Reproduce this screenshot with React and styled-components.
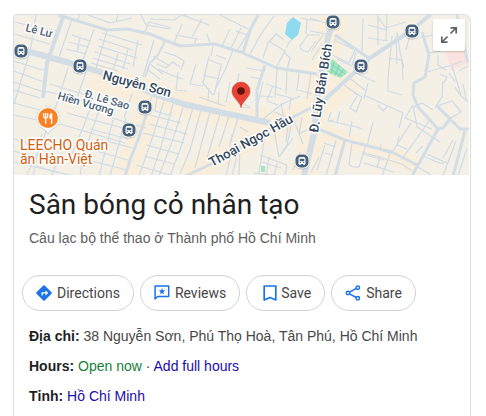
import React from "react";
import styled, { createGlobalStyle, css } from "styled-components";

const GlobalStyle = createGlobalStyle`
  * {
    box-sizing: border-box;
  }
  body {
    margin: 0;
    background: #fff;
    color: #474747;
    font: 14px/20px "Liberation Sans", Arial, sans-serif;
  }
`;

const Page = styled.main`
  padding: 14px 15px 0 13px;
`;

const Card = styled.article`
  min-height: calc(100vh - 14px);
  border: 1px solid #dadce0;
  border-bottom: none;
  border-radius: 4px 8px 0 0;
  overflow: hidden;
`;

const MapFrame = styled.div`
  position: relative;
  height: 160px;
  margin-right: 1px;
  background: #f4f0e5;
`;

const MapSvg = styled.svg`
  display: block;
  width: 100%;
  height: 100%;
`;

const labelHalo = css`
  paint-order: stroke;
  stroke: #fff;
  stroke-width: 3px;
  stroke-linejoin: round;
`;

const StreetLabel = styled.text`
  ${labelHalo};
  font-family: Roboto, sans-serif;
  font-size: ${({ $major }) => ($major ? 13 : 11)}px;
  font-weight: 500;
  fill: ${({ $major }) => ($major ? "#33475b" : "#4a6075")};
`;

const PlaceLabel = styled.text`
  ${labelHalo};
  font-family: Roboto, sans-serif;
  font-size: 14px;
  fill: #d0600f;
`;

const ExpandButton = styled.button`
  position: absolute;
  top: 4px;
  right: 4px;
  display: grid;
  place-items: center;
  width: 32px;
  height: 32px;
  padding: 0;
  border: none;
  border-radius: 2px;
  background: #fff;
  box-shadow: 0 1px 2px rgba(0, 0, 0, 0.2);
  cursor: pointer;
`;

const Header = styled.header`
  padding: 12px 15px 0;
`;

const Title = styled.h1`
  margin: 0 0 5px;
  color: #1f1f1f;
  font: 400 28px/36px Roboto, sans-serif;
`;

const Subtitle = styled.p`
  margin: 0;
  color: #5e5e5e;
`;

const Actions = styled.div`
  display: flex;
  flex-wrap: wrap;
  gap: 6px;
  padding: 27px 8px 0;
`;

const ActionButton = styled.button`
  display: flex;
  align-items: center;
  gap: 2px;
  height: 36px;
  padding: 0 13px 0 12px;
  border: 1px solid #d2d2d2;
  border-radius: 18px;
  background: #fff;
  color: #474747;
  font: 400 14px/20px Roboto, sans-serif;
  cursor: pointer;
`;

const Facts = styled.div`
  display: flex;
  flex-direction: column;
  gap: 10px;
  padding: 15px 15px 16px;
`;

const Fact = styled.div``;

const FactName = styled.span`
  color: #1f1f1f;
  font-weight: 700;
`;

const OpenNow = styled.span`
  color: #188038;
`;

const FactLink = styled.a`
  color: #1a0dab;
  text-decoration: none;

  &:hover {
    text-decoration: underline;
  }
`;

const mainRoads = [
  { w: 6, d: "M14 47L30 52L70 63L100 72L157 95L183 104L233 115L270 123" },
  { w: 6, d: "M334 15L333 22L328 37L317 100L314 134L304 176" },
  { w: 3, d: "M58 15L107 30L127 29L150 34L167 41L180 46L215 44L243 53L277 68L317 74" },
  { w: 3, d: "M186 176L213 163L267 131L293 117L307 110L318 105" },
  { w: 4, d: "M431 14L412 30L370 58L330 95L318 106" },
  { w: 3, d: "M370 59L335 35" },
  { w: 3, d: "M258 15L250 30L243 53" },
  { w: 3, d: "M265 65L257 90L257 117" },
  { w: 2, d: "M165 41L158 55L150 63L145 77" },
  { w: 4, d: "M63 17L47 63L43 98" },
  { w: 3, d: "M147 113L138 140L130 160L125 176" },
  { w: 3, d: "M422 32L429 55L425 77L414 83L413 95L418 107L438 129L412 176" },
  { w: 3, d: "M438 129L443 128L450 119L437 106L460 129L470 129" },
  { w: 3, d: "M465 131L453 176" },
  { w: 3, d: "M316 128L345 140L392 152L417 165" },
  { w: 3, d: "M345 140L335 176" },
  { w: 3, d: "M457 15L468 63" },
];

const sideRoads = [
  // north-west blocks
  "M14 22L56 31M14 34L50 44M14 61L46 71M14 71L44 82M14 82L44 92M14 90L40 98",
  "M36 15L30 52L20 84L14 104M72 19L58 60M94 29L82 63M107 31L96 68",
  "M72 35L90 41M68 42L89 47M66 49L86 54M80 38L77 52M102 33L142 45M99 39L133 50",
  "M98 46L137 58M95 52L130 64M93 58L128 69M91 63L118 71M138 40L133 67M128 49L123 69M118 54L113 70",
  "M80 15L77 21M88 15L110 23L132 18M116 22L118 15M141 15L146 25L170 29M154 40L143 77",
  "M145 32L149 22L172 28M153 56L170 66M150 64L163 74M148 70L160 79",
  // north middle
  "M150 19L174 20L182 15M182 15L209 25M202 19L192 37M182 24L174 43M175 35L198 39M184 15L190 18L201 22",
  "M207 34L210 43M213 46L211 56M196 38L194 46M220 15L248 29M230 29L222 46M241 28L231 48M236 31L250 36M248 33L237 51",
  "M274 16L261 34L250 54M233 50L226 68L216 88M216 55L226 59M209 60L222 65M203 75L219 79M196 64L190 84L203 86",
  "M209 56L203 83L213 95M221 66L214 95M263 58L268 43L276 34L284 40M270 42L285 51L277 66M284 52L290 58L287 70",
  "M291 40L286 48M307 19L306 34",
  "M320 35L308 35L300 46Q300 51 308 52L316 41",
  "M300 18L317 21M164 52L176 56L184 61L181 70M157 64L166 68L173 62L180 67M158 69L171 75L183 79M178 72L176 90L187 91",
  "M246 68L265 71M250 77L262 79M239 73L237 85M277 69L275 98M287 70L286 94M299 73L297 91M275 94L292 98M266 84L282 89",
  "M263 82L258 103M273 86L267 100M311 74L307 99M299 90L312 94",
  // streets below the main road
  "M14 103L54 114M14 115L60 125M50 84L128 108M45 91L84 101M60 124L125 143M67 113L138 132M112 118L146 128",
  "M56 106L38 152L26 176M68 68L56 106M86 72L76 101M101 105L84 153L80 176M113 120L99 176M126 118L110 176M92 103L83 128L72 154",
  "M14 139L36 145M14 151L34 157M14 162L74 176M86 148L128 160M80 158L127 170M98 139L133 148M90 129L128 139",
  "M42 134L33 176M62 153L51 176M36 166L59 173M132 94L124 118M152 96L146 116L138 136M164 101L150 145L139 176M173 104L160 150L151 176",
  "M183 108L173 139L159 176M193 108L180 150L170 176M201 110L190 150L180 174M210 112L195 168M220 114L207 158M229 116L219 147M238 118L230 144",
  "M150 115L181 123M149 124L187 134M143 133L184 143M146 145L179 154M144 156L174 164M136 165L170 175M157 97L155 111L172 116",
  "M232 134L229 151M240 127L248 132M249 136L256 140M232 151L226 176M238 151L232 176M265 135L259 173",
  // south middle
  "M274 130L279 157L287 145L291 126M269 131L281 124M280 156L293 138M289 117L286 142M293 118L303 144M302 117L299 134L310 128",
  "M260 155L287 165L285 176M262 162L281 168M269 157L266 176M277 163L274 176M253 173L282 176M300 152L293 170M240 145L239 176",
  "M199 97L225 106M209 88L208 101M219 92L218 105M230 82L226 103M246 92L244 104L250 108L240 107M267 101L278 105M260 96L273 97",
  "M263 119L282 104L300 96M274 112L294 120M281 103L284 118M291 98L289 110",
  // north-east
  "M310 18L326 23M310 31L326 34M322 44L312 60M323 35L311 52M336 41L355 50L349 63L330 54L336 38M356 52L352 66L337 59",
  "M363 19L362 52M378 15L378 45M387 15L386 40M368 25L387 30M368 38L388 41M392 36L388 78L388 91L402 95M396 36L397 64M388 58L402 60L403 80",
  "M377 16L386 28L406 22M397 32L400 52L404 68M410 34L406 50M420 38L450 31L461 25",
  "M429 53L440 51L448 44M427 72L452 65L463 61M438 55L438 65L446 70M440 74L447 77L444 83M452 66L461 95M449 73L455 82",
  "M443 81L442 97L435 108M438 44L444 51M468 66L459 71M463 84L466 99M455 87L460 95L468 102",
  "M356 73L375 82M368 83L364 99M348 77L365 90M344 85L360 96",
  // south-east
  "M357 96L350 108L356 112L362 97L354 93M378 105L383 111L387 107M364 95L403 113L399 128M373 122L367 146M331 112L328 121L334 120",
  "M329 121L353 126L363 129M340 111L337 123M352 121L349 137M381 144L380 150L389 153M399 136L397 145L407 149",
  "M325 145L317 170M336 140L326 176M324 143L336 147M325 153L333 155M352 143L349 164Q352 168 359 167L366 145M362 152L402 164L412 171",
  "M362 154L384 160M380 156L377 168M364 163L394 172M391 151L382 176M429 121L402 159M411 123L393 151",
  "M432 129L405 118L413 105M413 105L417 127L440 142M419 110L428 116",
  "M433 110L422 103L414 107M437 106L452 101L461 112L451 118L441 110",
  "M456 141L443 176M453 140L443 158M467 148L458 176M423 146L416 153M423 156L437 162L444 164M427 154L447 163M413 164L431 175",
  "M319 157L311 172",
];

const busStops = [
  [21, 51],
  [80, 66],
  [145, 107],
  [129, 130],
  [302, 161],
  [333, 22],
  [361, 66],
  [412, 31],
];

const streetLabels = [
  { text: "Lê Lư", x: 25, y: 31, angle: 14 },
  { text: "Đ. Lê Sao", x: 84, y: 97, angle: 16 },
  { text: "Hiền Vương", x: 57, y: 99, angle: 16 },
  { text: "Nguyễn Sơn", x: 102, y: 79, angle: 15, major: true },
  { text: "Thoại Ngọc Hầu", x: 212, y: 167, angle: -29, major: true },
  { text: "Đ. Lũy Bán Bích", x: 318, y: 133, angle: -81, major: true },
];

function BusStop({ x, y }) {
  return (
    <g transform={`translate(${x} ${y})`}>
      <rect x="-7.5" y="-6.5" width="15" height="15" rx="6" fill="#8a8f96" opacity="0.35" />
      <rect x="-7.3" y="-7.3" width="14.6" height="14.6" rx="5.5" fill="#fff" />
      <rect x="-6.5" y="-6.5" width="13" height="13" rx="5" fill="#47627a" />
      <path d="M-3.5 3V-2Q-3.5-4-1.5-4H1.5Q3.5-4 3.5-2V3H2.8V4H1.3V3H-1.3V4H-2.8V3Z" fill="#fff" />
      <path d="M-2.3-2.2H2.3V.2H-2.3Z" fill="#47627a" />
      <path d="M-2.3 1.5H-1.2M1.2 1.5H2.3" stroke="#47627a" />
    </g>
  );
}

function AreaMap() {
  return (
    <MapSvg viewBox="14 15 455 160" preserveAspectRatio="xMidYMid slice" role="img" aria-label="Map">
      <g fill="none" stroke="#f8eedb" strokeLinejoin="round">
        <path d="M90 76L157 95L183 104L233 115L270 123" strokeWidth="26" />
        <path d="M186 176L267 131L318 105L355 78" strokeWidth="24" />
        <path d="M334 15L317 100L304 176" strokeWidth="26" />
        <path d="M316 128L345 140L417 165" strokeWidth="16" />
        <path d="M147 113L125 176" strokeWidth="24" />
      </g>
      <path d="M445 49L466 49L468 63L451 70Z" fill="#fbe2df" />
      <path d="M293 17L301 23L298 35L292 40L285 34L287 23Z" fill="#8edaef" />
      <path d="M331 58L348 72L341 78L327 72Z" fill="#a5e5c5" />
      <path d="M334 61L331 74M339 65L335 76M344 69L338 77M330 63L345 74M328 68L342 76" stroke="#72cda4" strokeWidth="0.7" />
      <path d="M261 166H265V172H261Z" fill="#a5e5c5" />
      <g fill="none" stroke="#cfdbe6" strokeLinejoin="round">
        {sideRoads.map((d) => (
          <path key={d} d={d} strokeWidth="1.2" />
        ))}
        {mainRoads.map(({ w, d }) => (
          <path key={d} d={d} strokeWidth={w} stroke="#d3dde6" />
        ))}
      </g>
      {streetLabels.map(({ text, x, y, angle, major }) => (
        <StreetLabel key={text} $major={major} transform={`translate(${x} ${y}) rotate(${angle})`}>
          {text}
        </StreetLabel>
      ))}
      {busStops.map(([x, y]) => (
        <BusStop key={`${x}-${y}`} x={x} y={y} />
      ))}
      <g transform="translate(48 118)">
        <path d="M0 17C-1 13-4 12-8 9A12 12 0 1 1 8 9C4 12 1 13 0 17Z" fill="#9a9a9a" opacity="0.5" />
        <path d="M0 16C-1 12-4 11-8 8.5A11.6 11.6 0 1 1 8 8.5C4 11 1 12 0 16Z" fill="#fff" />
        <circle r="10" fill="#fb8125" />
        <path d="M-4.3-5V-2Q-4.3 0-2.3 0Q-.3 0-.3-2V-5M-2.3-5V6" fill="none" stroke="#fff" strokeWidth="1.3" />
        <path d="M4.3-5Q1.3-5 1.3-1V1H3V6H4.3Z" fill="#fff" />
      </g>
      <PlaceLabel>
        <tspan x="20" y="150">LEECHO Quán</tspan>
        <tspan x="20" y="164">ăn Hàn-Việt</tspan>
      </PlaceLabel>
      <path
        d="M241 107.5C240 101 232 98 232 91A9 9 0 0 1 250 91C250 98 242 101 241 107.5Z"
        fill="#ea4335"
        stroke="#c5362b"
        strokeWidth="0.5"
      />
      <circle cx="241" cy="91" r="3.8" fill="#601410" />
    </MapSvg>
  );
}

function ExpandIcon() {
  return (
    <svg width="18" height="18" viewBox="0 0 18 18" fill="none" stroke="#5f6368" strokeWidth="1.7">
      <path d="M10.5 7.5L16 2M10.5 1.8H16.2V7.5M7.5 10.5L2 16M1.8 10.5V16.2H7.5" />
    </svg>
  );
}

function DirectionsIcon() {
  return (
    <svg width="20" height="20" viewBox="0 0 20 20">
      <path
        d="M8.3 2.5Q9 1.9 9.7 2.5L16.5 9.3Q17.1 10 16.5 10.7L9.7 17.5Q9 18.1 8.3 17.5L1.5 10.7Q.9 10 1.5 9.3Z"
        fill="#1a73e8"
      />
      <path d="M6.5 12.5V9.3H10.5V7.2L13.2 9.9L10.5 12.6V10.6H7.8V12.5Z" fill="#fff" />
    </svg>
  );
}

function ReviewsIcon() {
  return (
    <svg width="20" height="20" viewBox="0 0 20 20">
      <path d="M2.1 16V3.1H15.7V13.5H4.6Z" fill="none" stroke="#1a73e8" strokeWidth="1.5" strokeLinejoin="round" />
      <path d="M9 5L9.9 7.3L12.2 7.4L10.4 8.9L11 11.2L9 9.9L7 11.2L7.6 8.9L5.8 7.4L8.1 7.3Z" fill="#1a73e8" />
    </svg>
  );
}

function SaveIcon() {
  return (
    <svg width="20" height="20" viewBox="0 0 20 20" fill="none" stroke="#1a73e8" strokeWidth="1.7">
      <path d="M5.2 3H16.8V17L11 14.5L5.2 17Z" strokeLinejoin="round" />
    </svg>
  );
}

function ShareIcon() {
  return (
    <svg width="20" height="20" viewBox="0 0 20 20" fill="none" stroke="#1a73e8" strokeWidth="1.5">
      <path d="M5.5 9.2L12.3 5.3M5.5 10.8L12.3 14.5" />
      <circle cx="4" cy="10" r="1.7" />
      <circle cx="13.8" cy="4.7" r="1.7" />
      <circle cx="13.8" cy="15.2" r="1.7" />
    </svg>
  );
}

const actions = [
  { label: "Directions", Icon: DirectionsIcon },
  { label: "Reviews", Icon: ReviewsIcon },
  { label: "Save", Icon: SaveIcon },
  { label: "Share", Icon: ShareIcon },
];

function App() {
  return (
    <>
      <GlobalStyle />
      <Page>
        <Card>
          <MapFrame>
            <AreaMap />
            <ExpandButton aria-label="Expand map">
              <ExpandIcon />
            </ExpandButton>
          </MapFrame>
          <Header>
            <Title>Sân bóng cỏ nhân tạo</Title>
            <Subtitle>Câu lạc bộ thể thao ở Thành phố Hồ Chí Minh</Subtitle>
          </Header>
          <Actions>
            {actions.map(({ label, Icon }) => (
              <ActionButton key={label}>
                <Icon />
                {label}
              </ActionButton>
            ))}
          </Actions>
          <Facts>
            <Fact>
              <FactName>Địa chỉ:</FactName> 38 Nguyễn Sơn, Phú Thọ Hoà, Tân Phú, Hồ Chí Minh
            </Fact>
            <Fact>
              <FactName>Hours:</FactName> <OpenNow>Open now</OpenNow> · <FactLink href="#hours">Add full hours</FactLink>
            </Fact>
            <Fact>
              <FactName>Tỉnh:</FactName> <FactLink href="#province">Hồ Chí Minh</FactLink>
            </Fact>
          </Facts>
        </Card>
      </Page>
    </>
  );
}

export default App;
